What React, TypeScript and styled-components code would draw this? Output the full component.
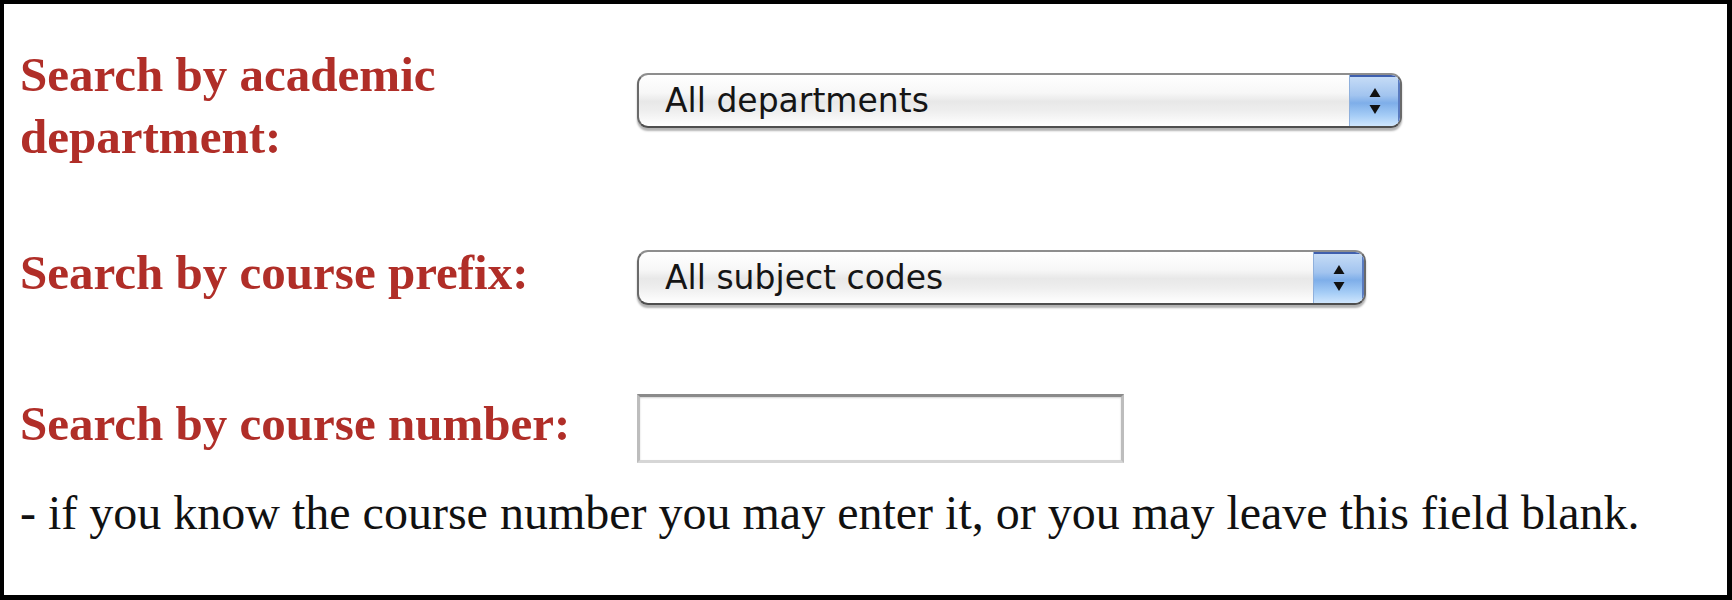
import React from "react";
import styled, { createGlobalStyle } from "styled-components";

const GlobalStyle = createGlobalStyle`
  html, body {
    margin: 0;
    padding: 0;
    background: #fff;
  }
  body {
    font-family: "Liberation Serif", "Times New Roman", serif;
  }
`;

const Frame = styled.div`
  box-sizing: border-box;
  width: 1732px;
  height: 600px;
  border-style: solid;
  border-color: #000;
  border-width: 4px 5px 5px 4px;
  padding: 40px 0 0 16px;
  background: #fff;
`;

const Row = styled.div<{ $top: number }>`
  display: flex;
  align-items: flex-start;
  margin-top: ${(p) => p.$top}px;
`;

const Label = styled.label`
  flex: none;
  width: 617px;
  font-family: "Liberation Serif", "Times New Roman", serif;
  font-weight: bold;
  font-size: 49px;
  line-height: 62px;
  color: #b02e28;
`;

const Popup = styled.div<{ $width: number; $top: number }>`
  display: flex;
  box-sizing: border-box;
  width: ${(p) => p.$width}px;
  height: 55px;
  margin-top: ${(p) => p.$top}px;
  border: 2px solid;
  border-color: #8e8e8e #6a6a6a #4e4e4e #6a6a6a;
  border-radius: 11px;
  overflow: hidden;
  background: linear-gradient(#ffffff 0%, #f7f7f7 35%, #e8e8e8 52%, #eeeeee 70%, #ffffff 100%);
  box-shadow: 0 3px 2px rgba(0, 0, 0, 0.3);
`;

const Select = styled.select`
  appearance: none;
  -webkit-appearance: none;
  flex: 1;
  height: 100%;
  margin: 0;
  padding: 0 0 0 26px;
  border: 0;
  outline: none;
  background: transparent;
  font-family: "DejaVu Sans", Verdana, sans-serif;
  font-size: 33px;
  color: #151515;
`;

const Stepper = styled.div`
  flex: none;
  width: 50px;
  display: flex;
  align-items: center;
  justify-content: center;
  border-left: 1px solid #8fb0dc;
  background: linear-gradient(#c9def7 0%, #a2c4ef 40%, #7eaee9 55%, #a6cdf6 80%, #cfe6fd 100%);
  box-shadow: inset 0 2px 0 #3f5fae, inset -2px 0 0 #5a7bc0;
`;

const TextBox = styled.input`
  box-sizing: border-box;
  width: 487px;
  height: 69px;
  margin-top: 1px;
  border: 3px solid;
  border-color: #8a8a8a #bdbdbd #d6d6d6 #bdbdbd;
  box-shadow: inset 0 1px 2px rgba(0, 0, 0, 0.18);
  background: #fff;
  outline: none;
`;

const Hint = styled.p`
  margin: 20px 0 0 0;
  font-family: "Liberation Serif", "Times New Roman", serif;
  font-size: 48px;
  line-height: 60px;
  color: #111;
`;

const Arrows = () => (
  <svg width="16" height="30" viewBox="0 0 16 30">
    <polygon points="8,2 2.5,11 13.5,11" fill="#111" />
    <polygon points="8,28 2.5,19 13.5,19" fill="#111" />
  </svg>
);

interface PopupSelectProps {
  width: number;
  top: number;
  value: string;
}

const PopupSelect = ({ width, top, value }: PopupSelectProps) => (
  <Popup $width={width} $top={top}>
    <Select defaultValue={value}>
      <option>{value}</option>
    </Select>
    <Stepper>
      <Arrows />
    </Stepper>
  </Popup>
);

const App = () => (
  <>
    <GlobalStyle />
    <Frame>
      <Row $top={0}>
        <Label>Search by academic department:</Label>
        <PopupSelect width={765} top={29} value="All departments" />
      </Row>
      <Row $top={74}>
        <Label>Search by course prefix:</Label>
        <PopupSelect width={729} top={8} value="All subject codes" />
      </Row>
      <Row $top={88}>
        <Label>Search by course number:</Label>
        <TextBox type="text" />
      </Row>
      <Hint>
        - if you know the course number you may enter it, or you may leave this field blank.
      </Hint>
    </Frame>
  </>
);

export default App;
